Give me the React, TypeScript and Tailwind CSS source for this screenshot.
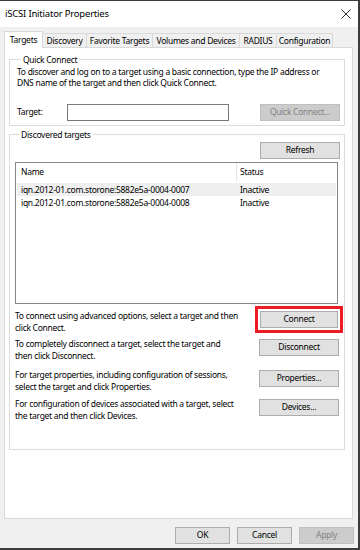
import React from "react";

const tabs = [
  { label: "Targets", w: "w-[39px]" },
  { label: "Discovery", w: "w-[44px]" },
  { label: "Favorite Targets", w: "w-[66px]" },
  { label: "Volumes and Devices", w: "w-[87px]" },
  { label: "RADIUS", w: "w-[37px]" },
  { label: "Configuration", w: "w-[56px]" },
];

function Btn({ children, className = "", disabled = false }: { children: React.ReactNode; className?: string; disabled?: boolean }) {
  return (
    <button
      className={
        "h-[17px] flex items-center justify-center border leading-none " +
        (disabled ? "bg-[#cccccc] border-[#bfbfbf] text-[#838383] " : "bg-[#e1e1e1] border-[#adadad] text-black ") +
        className
      }
    >
      {children}
    </button>
  );
}

export default function App() {
  return (
    <div className="w-[360px] h-[550px] bg-[#f0f0f0] border-t border-b-2 border-r-2 border-[#3c3c3c] flex flex-col font-['Noto_Sans',sans-serif] text-[8.5px] tracking-[-0.28px] leading-[11.5px] text-black whitespace-nowrap">
      {/* title bar */}
      <div className="h-[26px] bg-white flex items-center justify-between pl-[5px] pr-[7px]">
        <span className="text-[9.5px] tracking-[-0.2px]">iSCSI Initiator Properties</span>
        <svg width="10" height="10" viewBox="0 0 10 10" className="text-[#333]">
          <path d="M0.5 0.5 L9.5 9.5 M9.5 0.5 L0.5 9.5" stroke="currentColor" strokeWidth="1" />
        </svg>
      </div>

      <div className="flex flex-col pl-[4px] pr-[4px] pt-[4px]">
        {/* tabs */}
        <div className="flex items-end h-[16px]">
          {tabs.map((t, i) =>
            i === 0 ? (
              <div key={t.label} className={t.w + " h-[17px] -mb-px relative z-10 bg-white border-l border-t border-r border-[#d9d9d9] flex items-center justify-center"}>
                {t.label}
              </div>
            ) : (
              <div key={t.label} className={t.w + " h-[14px] bg-[#f0f0f0] border-t border-r border-[#d9d9d9] flex items-center justify-center"}>
                {t.label}
              </div>
            )
          )}
        </div>

        {/* panel */}
        <div className="w-[349px] h-[472px] bg-white border border-[#d9d9d9] pl-[4px] pr-[7px] pt-[6px]">
          <fieldset className="border border-[#dcdcdc] pl-[7px] pr-[4px] pb-[4px]">
            <legend className="ml-[4px] px-[2px]">Quick Connect</legend>
            <p>
              To discover and log on to a target using a basic connection, type the IP address or
              <br />
              DNS name of the target and then click Quick Connect.
            </p>
            <div className="flex items-center mt-[15px]">
              <span className="w-[50px]">Target:</span>
              <div className="w-[162px] h-[17px] border border-[#7a7a7a] bg-white" />
              <Btn disabled className="ml-auto w-[80px]">Quick Connect...</Btn>
            </div>
          </fieldset>

          <fieldset className="mt-[3px] border border-[#dcdcdc] pl-[5px] pr-[4px] pb-[28px]">
            <legend className="ml-[4px] px-[2px]">Discovered targets</legend>
            <div className="flex justify-end mt-[2px]">
              <Btn className="w-[80px]">Refresh</Btn>
            </div>
            <div className="mt-[3px] mr-[2px] h-[142px] border border-[#828790] bg-white">
              <div className="flex h-[18px] items-center">
                <div className="w-[221px] h-full pl-[5px] flex items-center border-r border-[#e5e5e5]">Name</div>
                <div className="pl-[3px]">Status</div>
              </div>
              <div className="mt-[2px] mx-[1px] flex h-[13px] items-center bg-[#efefef]">
                <div className="w-[223px] pl-[4px]">iqn.2012-01.com.storone:5882e5a-0004-0007</div>
                <div>Inactive</div>
              </div>
              <div className="mx-[1px] flex h-[13px] items-center">
                <div className="w-[223px] pl-[4px]">iqn.2012-01.com.storone:5882e5a-0004-0008</div>
                <div>Inactive</div>
              </div>
            </div>

            <div className="flex items-start justify-between mt-[6px]">
              <p>
                To connect using advanced options, select a target and then
                <br />
                click Connect.
              </p>
              <Btn className="mt-[1px] mr-[2px] w-[78px] outline-[3px] outline-solid outline-[#ed1c24] outline-offset-[2px]">Connect</Btn>
            </div>
            <div className="flex items-start justify-between mt-[5px]">
              <p>
                To completely disconnect a target, select the target and
                <br />
                then click Disconnect.
              </p>
              <Btn className="mt-[1px] mr-[1px] w-[80px]">Disconnect</Btn>
            </div>
            <div className="flex items-start justify-between mt-[8px]">
              <p>
                For target properties, including configuration of sessions,
                <br />
                select the target and click Properties.
              </p>
              <Btn className="mt-[1px] mr-[1px] w-[80px]">Properties...</Btn>
            </div>
            <div className="flex items-start justify-between mt-[6px]">
              <p>
                For configuration of devices associated with a target, select
                <br />
                the target and then click Devices.
              </p>
              <Btn className="mt-[1px] mr-[1px] w-[80px]">Devices...</Btn>
            </div>
          </fieldset>
        </div>

        {/* dialog buttons */}
        <div className="flex justify-end gap-[7px] mt-[8px]">
          <Btn className="w-[55px]">OK</Btn>
          <Btn className="w-[55px]">Cancel</Btn>
          <Btn disabled className="w-[55px]">Apply</Btn>
        </div>
      </div>
    </div>
  );
}
